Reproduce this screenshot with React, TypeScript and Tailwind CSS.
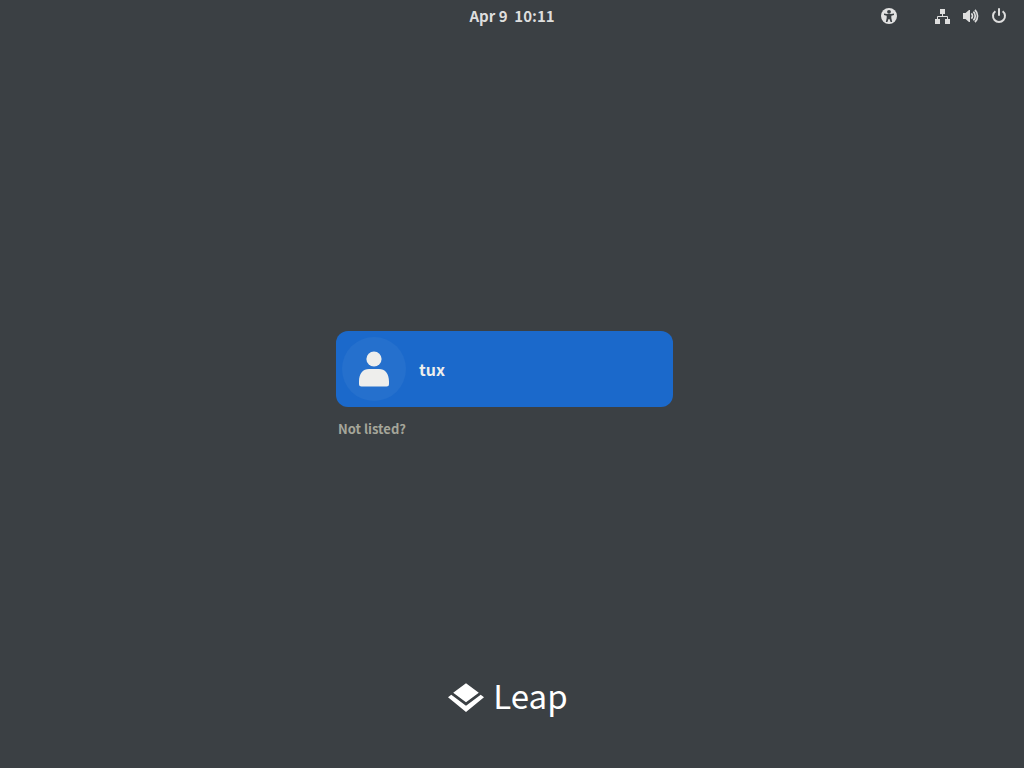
import React from "react";

function AccessibilityIcon() {
  return (
    <svg viewBox="0 0 16 16" className="size-4" aria-hidden="true">
      <circle cx="8" cy="8" r="8" fill="#e2e2e2" />
      <circle cx="8" cy="3.8" r="1.9" fill="#3b4044" />
      <path d="M3 5.500 6 6h4l3-.5v1.600L10.300 7.800V10l.9 4H9.600L8.400 11h-.8L6.400 14H4.800l.9-4V7.800L3 7.100z" fill="#3b4044" />
    </svg>
  );
}

function NetworkIcon() {
  return (
    <svg viewBox="0 0 16 16" className="size-4" fill="#dedede" aria-hidden="true">
      <path d="M5 1h5v5H5zM0 11h5v5H0zM10 11h5v5h-5z" />
      <path d="M2.500 11V8.500h10V11M7.500 6v2.500" fill="none" stroke="#dedede" />
    </svg>
  );
}

function VolumeIcon() {
  return (
    <svg viewBox="0 0 16 16" className="size-4" aria-hidden="true">
      <path d="M0 5h2.500L6 2H7v12H6L2.500 11H0z" fill="#dedede" />
      <path d="M8.400 5.400a3.600 3.600 0 0 1 0 5.200M10.400 3.600a6.200 6.200 0 0 1 0 8.800M12 1.800a8.800 8.800 0 0 1 0 12.400" fill="none" stroke="#dedede" strokeWidth="1.700" />
    </svg>
  );
}

function PowerIcon() {
  return (
    <svg viewBox="0 0 16 16" className="size-4" fill="none" stroke="#dedede" strokeWidth="2" aria-hidden="true">
      <path d="M4.400 3.200a6 6 0 1 0 7.200 0" />
      <path d="M8 1v6" strokeLinecap="round" />
    </svg>
  );
}

function Avatar() {
  return (
    <span className="flex size-16 items-center justify-center rounded-full bg-[#2570cd]">
      <svg viewBox="0 0 32 36" className="h-9 w-8" fill="#eeeeec" aria-hidden="true">
        <circle cx="16" cy="8" r="7.600" />
        <path d="M1 30.500C1 22.500 5 18 11 18h10c6 0 10 4.500 10 12.500V33a2.500 2.500 0 0 1-2.500 2.500h-25A2.500 2.500 0 0 1 1 33z" />
      </svg>
    </span>
  );
}

export default function App() {
  return (
    <div className="flex min-h-screen flex-col bg-[#3b4044] font-['Noto_Sans_CJK_SC','Noto_Sans',sans-serif]">
      <header className="grid h-8 grid-cols-[1fr_auto_1fr] items-center px-[17px]">
        <button type="button" className="col-start-2 whitespace-pre text-[15px] leading-5 font-bold text-[#dedede]">
          Apr 9  10:11
        </button>
        <div className="flex items-center justify-end gap-[38px]">
          <button type="button" aria-label="Accessibility">
            <AccessibilityIcon />
          </button>
          <button type="button" aria-label="System" className="flex gap-3">
            <NetworkIcon />
            <VolumeIcon />
            <PowerIcon />
          </button>
        </div>
      </header>

      <main className="flex flex-1 flex-col items-center justify-center pt-[63px] pr-[15px]">
        <div className="flex w-[337px] flex-col items-start gap-3">
          <button type="button" className="flex w-full items-center gap-[13px] rounded-xl bg-[#1b69cb] p-1.5 text-left">
            <Avatar />
            <span className="text-[16px] leading-6 font-bold text-[#eeeeec]">tux</span>
          </button>
          <button type="button" className="px-0.5 text-[13px] leading-5 font-bold text-[#a5a69a]">
            Not listed?
          </button>
        </div>
      </main>

      <footer className="flex items-center justify-center gap-[9px] pr-2 pb-[47px]">
        <svg viewBox="0 0 36 30" className="h-[30px] w-9" fill="#ffffff" aria-hidden="true">
          <path d="M18 .2 30.800 9.700 18 19.200 5.200 9.700zM0 14.200l3.300-2.500L18 22.800l14.700-11.100L36 14.200 18 29z" />
        </svg>
        <span className="pb-1.5 text-[33px] leading-10 text-white">Leap</span>
      </footer>
    </div>
  );
}
